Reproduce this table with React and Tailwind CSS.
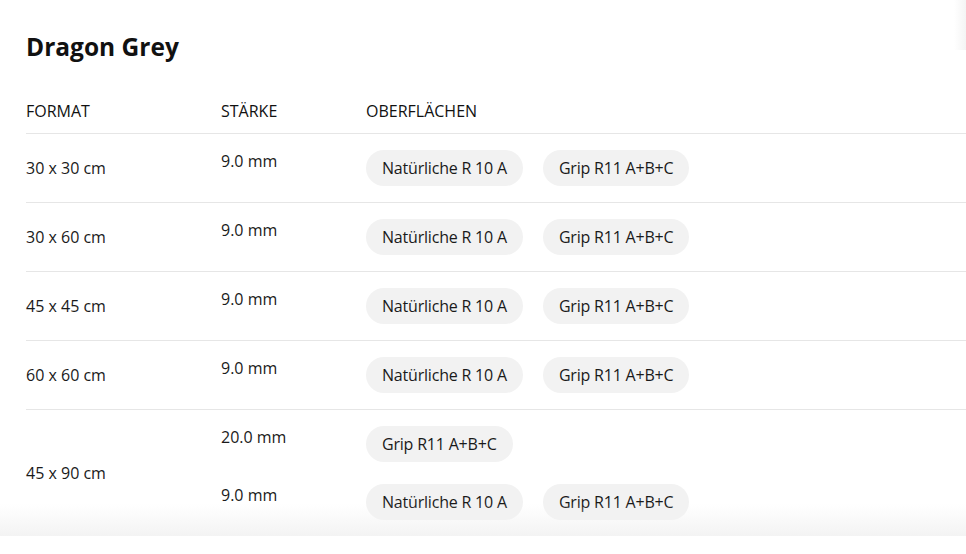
import React from "react";

const rows = [
  { format: "30 x 30 cm", items: [{ thickness: "9.0 mm", surfaces: ["Natürliche R 10 A", "Grip R11 A+B+C"] }] },
  { format: "30 x 60 cm", items: [{ thickness: "9.0 mm", surfaces: ["Natürliche R 10 A", "Grip R11 A+B+C"] }] },
  { format: "45 x 45 cm", items: [{ thickness: "9.0 mm", surfaces: ["Natürliche R 10 A", "Grip R11 A+B+C"] }] },
  { format: "60 x 60 cm", items: [{ thickness: "9.0 mm", surfaces: ["Natürliche R 10 A", "Grip R11 A+B+C"] }] },
  {
    format: "45 x 90 cm",
    items: [
      { thickness: "20.0 mm", surfaces: ["Grip R11 A+B+C"] },
      { thickness: "9.0 mm", surfaces: ["Natürliche R 10 A", "Grip R11 A+B+C"] },
    ],
  },
];

const Chip = ({ label }) => (
  <span className="inline-flex h-9 items-center rounded-full bg-[#f2f2f2] px-4 text-[16px] tracking-[-0.2px] text-[#1a1a1a]">
    {label}
  </span>
);

export default function App() {
  return (
    <div
      className="relative h-[554px] overflow-hidden bg-white"
      style={{ fontFamily: '"Open Sans", "Noto Sans", sans-serif' }}
    >
      <div className="relative pl-[26px] pt-[31px]">
        <h1 className="text-[24.5px] font-bold leading-8 text-[#111]">Dragon Grey</h1>

        <div className="mt-[36px] grid grid-cols-[195px_145px_1fr] pb-[10px] text-[16px] leading-6 text-[#111]">
          <div>FORMAT</div>
          <div>STÄRKE</div>
          <div>OBERFLÄCHEN</div>
        </div>

        {rows.map((row) => (
          <div
            key={row.format}
            className="grid grid-cols-[195px_1fr] border-t border-[#e6e6e6] py-4 text-[16px] text-[#1a1a1a]"
          >
            <div className="flex items-center">{row.format}</div>
            <div className="flex flex-col gap-[22px]">
              {row.items.map((item) => (
                <div key={item.thickness} className="grid grid-cols-[145px_1fr]">
                  <div className="leading-[22px]">{item.thickness}</div>
                  <div className="flex gap-5">
                    {item.surfaces.map((s) => (
                      <Chip key={s} label={s} />
                    ))}
                  </div>
                </div>
              ))}
            </div>
          </div>
        ))}

        <div className="pointer-events-none absolute bottom-0 left-0 right-0 h-[32px] bg-gradient-to-b from-transparent to-[#f2f2f2]/90" />
      </div>
      <div className="pointer-events-none absolute right-0 top-0 h-[50px] w-[12px] bg-gradient-to-r from-transparent to-[#f4f4f4]" />
    </div>
  );
}
